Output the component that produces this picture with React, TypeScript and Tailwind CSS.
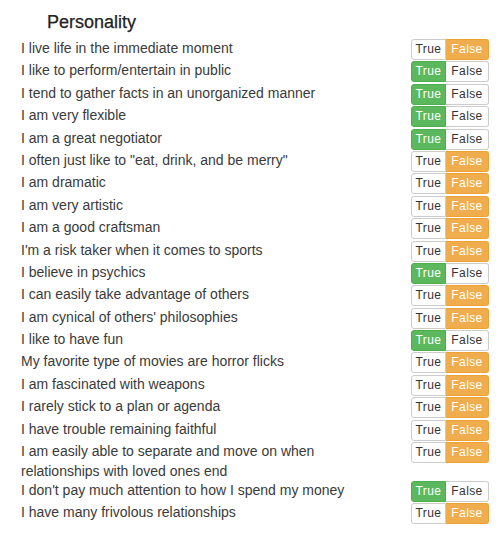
const items: { text: string; value: boolean }[] = [
  { text: "I live life in the immediate moment", value: false },
  { text: "I like to perform/entertain in public", value: true },
  { text: "I tend to gather facts in an unorganized manner", value: true },
  { text: "I am very flexible", value: true },
  { text: "I am a great negotiator", value: true },
  { text: 'I often just like to "eat, drink, and be merry"', value: false },
  { text: "I am dramatic", value: false },
  { text: "I am very artistic", value: false },
  { text: "I am a good craftsman", value: false },
  { text: "I'm a risk taker when it comes to sports", value: false },
  { text: "I believe in psychics", value: true },
  { text: "I can easily take advantage of others", value: false },
  { text: "I am cynical of others' philosophies", value: false },
  { text: "I like to have fun", value: true },
  { text: "My favorite type of movies are horror flicks", value: false },
  { text: "I am fascinated with weapons", value: false },
  { text: "I rarely stick to a plan or agenda", value: false },
  { text: "I have trouble remaining faithful", value: false },
  {
    text: "I am easily able to separate and move on when relationships with loved ones end",
    value: false,
  },
  { text: "I don't pay much attention to how I spend my money", value: true },
  { text: "I have many frivolous relationships", value: false },
];

function Toggle({ value }: { value: boolean }) {
  return (
    <div className="flex h-[21px] text-[12px] leading-[19px] tracking-[0.4px] font-['Liberation_Sans',Arial,sans-serif]">
      <span
        className={
          value
            ? "w-[35px] text-center rounded-l-[3px] border border-[#4cae4c] bg-[#5cb85c] text-white"
            : "w-[35px] text-center rounded-l-[3px] border border-[#ccc] bg-white text-[#333]"
        }
      >
        True
      </span>
      <span
        className={
          value
            ? "w-[43px] text-center rounded-r-[3px] border border-l-0 border-[#ccc] bg-white text-[#333]"
            : "w-[43px] text-center rounded-r-[3px] border border-l-0 border-[#eea236] bg-[#f0ad4e] text-white"
        }
      >
        False
      </span>
    </div>
  );
}

export default function App() {
  return (
    <div className="w-[503px] h-[540px] bg-white pt-[12px] pl-[21px] pr-[14px] font-['Liberation_Sans',Arial,sans-serif] text-[#3a3a3a]">
      {/* Heading */}
      <h4 className="pl-[26px] text-[18px] leading-[20px] font-medium text-[#222] [-webkit-text-stroke:0.25px_#222]">
        Personality
      </h4>

      {/* Questions */}
      <div className="mt-[7px] flex flex-col">
        {items.map((item, index) => (
          <div key={index} className="flex justify-between items-start min-h-[22.4px]">
            <p className="w-[360px] text-[14px] leading-[19.5px]">{item.text}</p>
            <Toggle value={item.value} />
          </div>
        ))}
      </div>
    </div>
  );
}
